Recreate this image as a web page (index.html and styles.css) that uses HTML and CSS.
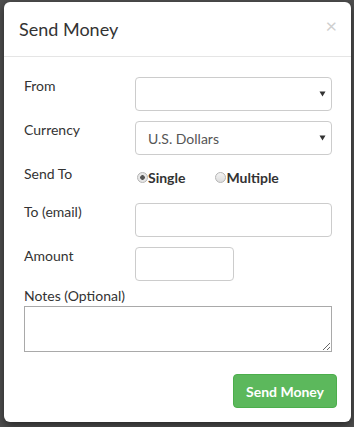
FILE: index.html
```
<!DOCTYPE html>
<html>
<head>
    <title>Send Money</title>
    <link rel="stylesheet" href="styles.css">
</head>
<body>
    <div class="modal">
        <div class="modal-header">
            <h4 class="modal-title">Send Money</h4>
            <span class="close">&times;</span>
        </div>

        <div class="modal-body">
            <div class="form-row">
                <label>From</label>
                <div class="select-wrap">
                    <select class="field"></select>
                    <svg class="caret" width="7" height="6" viewBox="0 0 7 6"><path d="M0.5 0.5 H6.5 L3.5 5.5 Z" fill="#333"/></svg>
                </div>
            </div>
            <div class="form-row">
                <label>Currency</label>
                <div class="select-wrap">
                    <select class="field">
                        <option>U.S. Dollars</option>
                    </select>
                    <svg class="caret" width="7" height="6" viewBox="0 0 7 6"><path d="M0.5 0.5 H6.5 L3.5 5.5 Z" fill="#333"/></svg>
                </div>
            </div>
            <div class="form-row radio-row">
                <label>Send To</label>
                <div class="radios">
                    <label class="radio"><input type="radio" name="sendto" checked>Single</label>
                    <label class="radio"><input type="radio" name="sendto">Multiple</label>
                </div>
            </div>
            <div class="form-row">
                <label>To (email)</label>
                <input class="field" type="text">
            </div>
            <div class="form-row amount-row">
                <label>Amount</label>
                <input class="field amount" type="text">
            </div>

            <!-- Notes spans the full width -->
            <label class="notes-label">Notes (Optional)</label>
            <textarea class="notes"></textarea>
        </div>

        <div class="modal-footer">
            <button class="btn-send">Send Money</button>
        </div>
    </div>
</body>
</html>
```

FILE: styles.css
```
body {
    margin: 0;
    padding: 2px 3px 5px 4px;
    background-color: #4e4e4e;
    font-family: 'Lato', 'Liberation Sans', sans-serif;
    color: #333;
}

.modal {
    width: 347px;
    height: 420px;
    background: #fff;
    border-radius: 6px;
    box-shadow: 0 3px 9px rgba(0, 0, 0, 0.5);
}

.modal-header {
    display: flex;
    justify-content: space-between;
    align-items: flex-start;
    height: 40px;
    padding: 14px 14px 0 15px;
    border-bottom: 1px solid #e5e5e5;
}

.modal-title {
    margin: 0;
    font-size: 18px;
    font-weight: normal;
    line-height: 26px;
}

.close {
    font-size: 20px;
    line-height: 18px;
    color: #cfcfcf;
}

.modal-body {
    padding: 20px 19px 7px 20px;
}

.form-row {
    display: flex;
    align-items: flex-start;
    margin-bottom: 10px;
}

.form-row > label {
    width: 111px;
    flex-shrink: 0;
    font-size: 14px;
    line-height: 18px;
}

.select-wrap {
    position: relative;
    flex: 1;
    display: flex;
    min-width: 0;
}

.field {
    flex: 1;
    width: 0;
    min-width: 0;
    height: 34px;
    box-sizing: border-box;
    border: 1px solid #ccc;
    border-radius: 4px;
    background: #fff;
    padding: 0 12px;
    font-family: inherit;
    font-size: 14px;
    color: #555;
    margin: 0;
    -webkit-appearance: none;
    appearance: none;
}

.caret {
    position: absolute;
    right: 6px;
    top: 14px;
}

.radio-row {
    height: 28px;
}

.radios {
    display: flex;
    gap: 28px;
    padding-top: 4px;
}

.radio {
    display: flex;
    align-items: center;
    font-size: 14px;
    font-weight: bold;
    color: #333;
}

.radio input {
    -webkit-appearance: none;
    appearance: none;
    width: 11px;
    height: 11px;
    margin: 0 0 0 2px;
    border: 1px solid #b5b5b5;
    border-radius: 50%;
    background: linear-gradient(#f4f4f4, #dcdcdc);
}

.radio input:checked {
    background: radial-gradient(circle, #555 0, #555 2px, #e6e6e6 2.6px);
}

.amount-row {
    margin-bottom: 6px;
}

.field.amount {
    flex: none;
    width: 99px;
}

.notes-label {
    display: block;
    font-size: 14px;
    line-height: 18px;
}

.notes {
    display: block;
    width: 308px;
    height: 46px;
    box-sizing: border-box;
    margin: 1px 0 0 0;
    border: 1px solid #a9a9a9;
    font-family: inherit;
}

.modal-footer {
    display: flex;
    justify-content: flex-end;
    padding: 15px 14px 14px 15px;
}

.btn-send {
    width: 104px;
    height: 34px;
    border: 1px solid #4cae4c;
    border-radius: 4px;
    background-color: #5cb85c;
    color: #fff;
    font-family: inherit;
    font-size: 14px;
    font-weight: bold;
    padding: 0;
}
```
